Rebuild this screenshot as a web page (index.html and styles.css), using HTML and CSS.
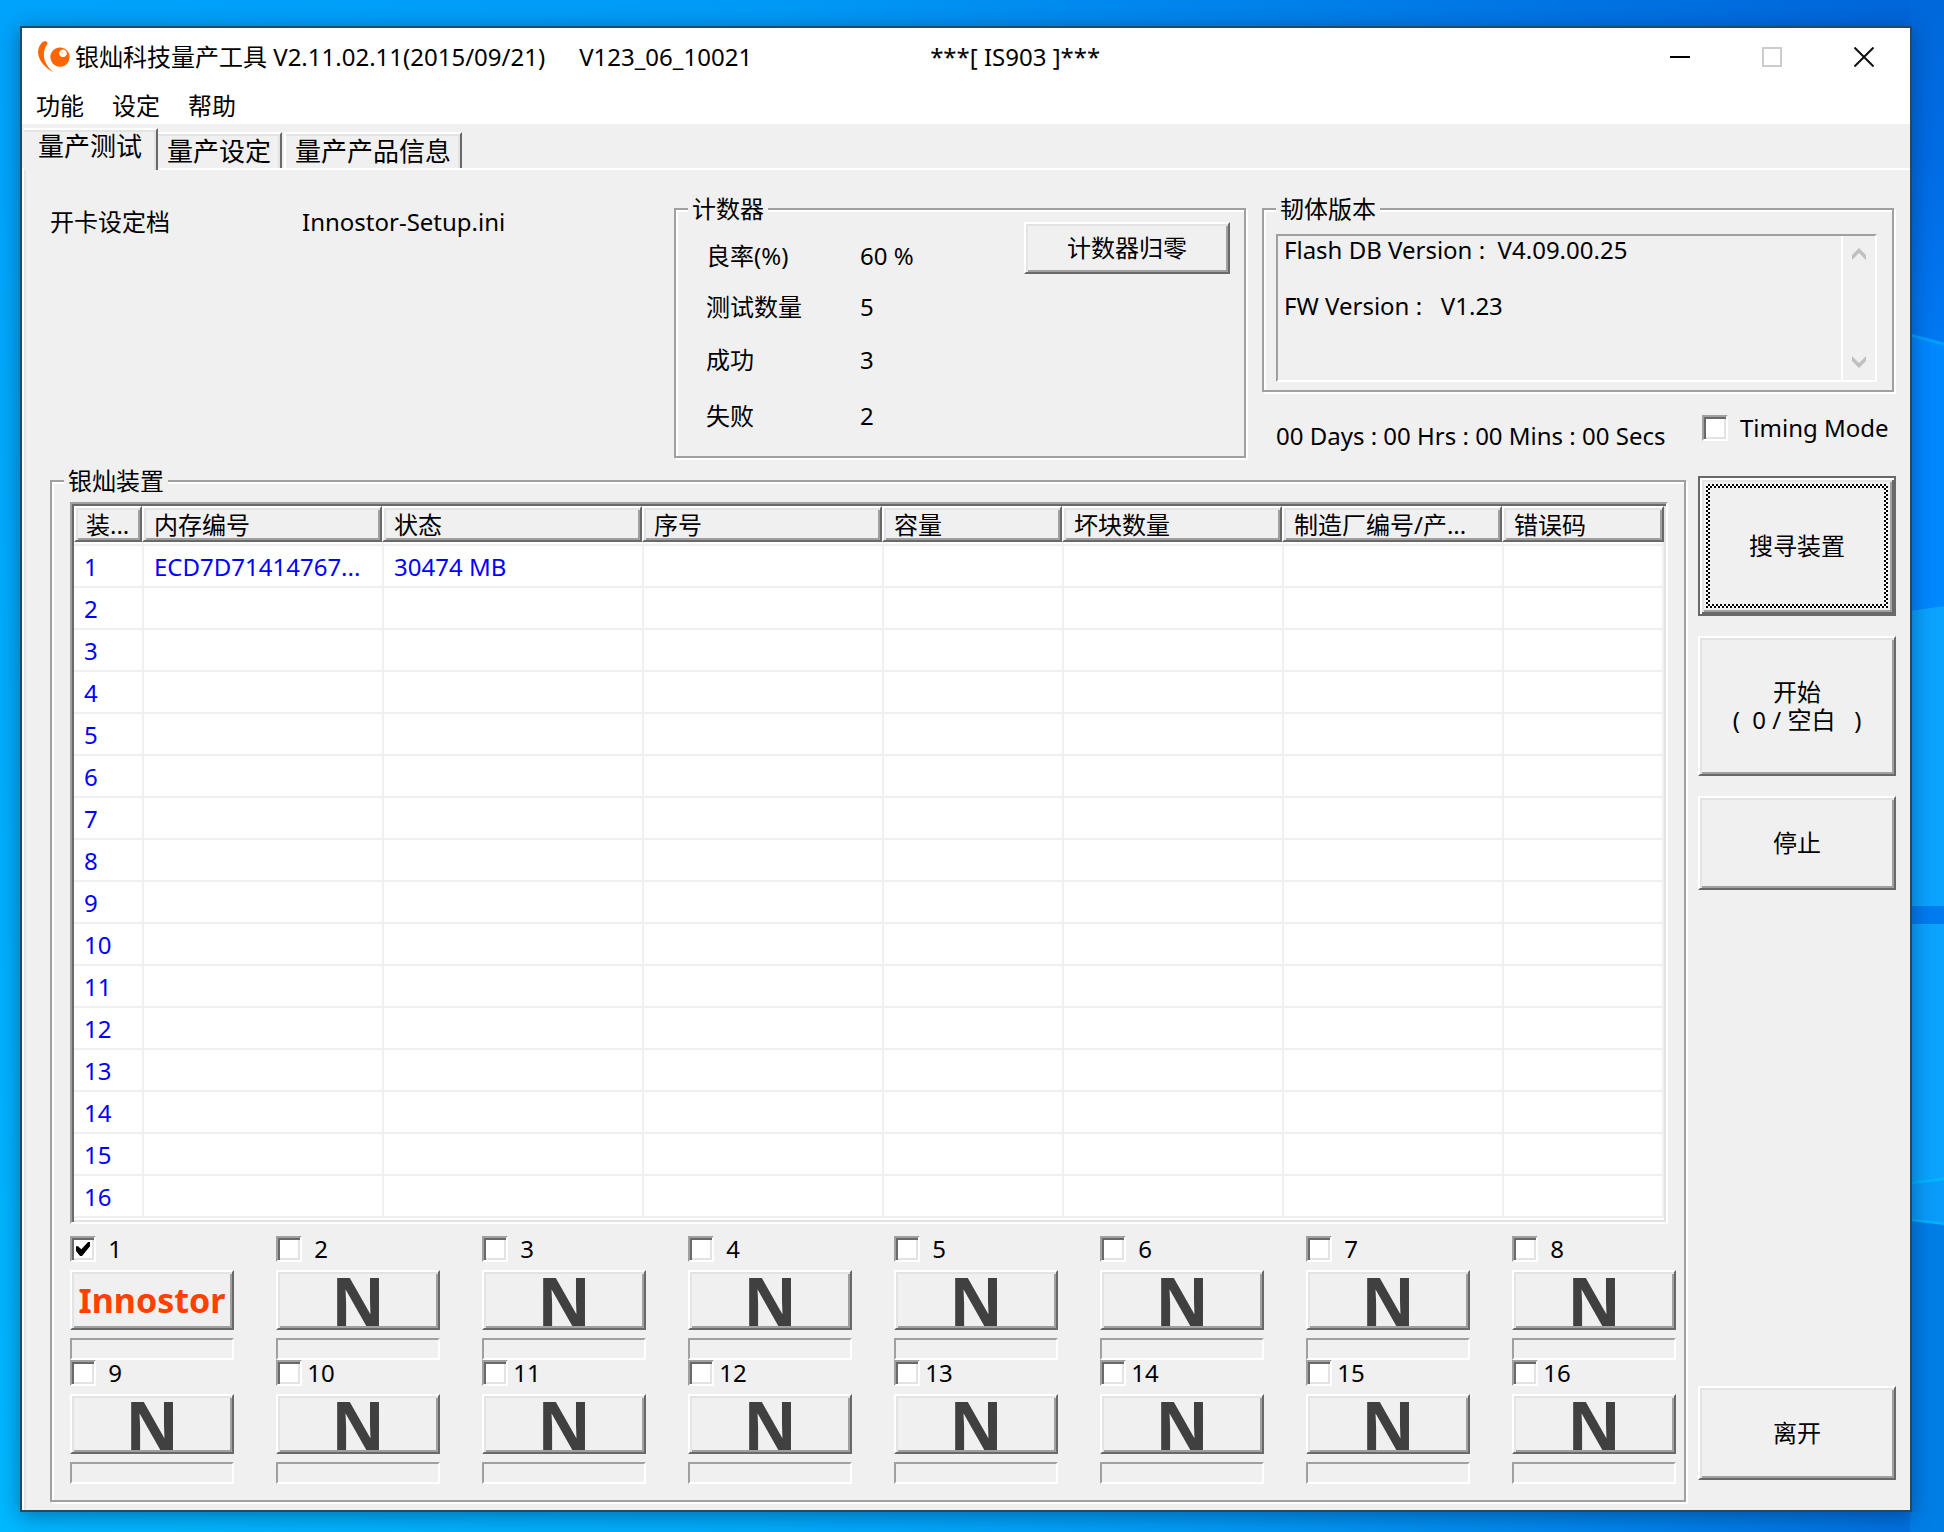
FILE: index.html
```html
<!DOCTYPE html>
<html lang="zh-CN">
<head>
<meta charset="utf-8">
<meta name="viewport" content="width=device-width, initial-scale=1">
<title>银灿科技量产工具 V2.11.02.11</title>
<link rel="stylesheet" href="styles.css">
</head>
<body>
<svg class="wallpaper" viewBox="0 0 34 1532" preserveAspectRatio="none" aria-hidden="true">
  <defs>
    <linearGradient id="sky" x1="0" y1="0" x2="0" y2="1">
      <stop offset="0" stop-color="#0068da"/>
      <stop offset="0.1" stop-color="#006ce4"/>
      <stop offset="0.22" stop-color="#0078f2"/>
    </linearGradient>
  </defs>
  <rect width="34" height="1532" fill="url(#sky)"/>
  <path d="M0 335L34 344V606L0 611Z" fill="#0088ff"/>
  <path d="M0 335L34 344" stroke="#00a0ff" stroke-width="3"/>
  <path d="M0 611L34 606V1180L0 1184Z" fill="#0aa4ff"/>
  <rect y="906" width="34" height="18" fill="#007cf0"/>
  <path d="M0 1184L34 1180V1224L0 1220Z" fill="#0a9cfa"/>
  <path d="M0 1183L34 1179M0 1220L34 1224" stroke="#00b4ff" stroke-width="3"/>
  <path d="M0 1221L34 1225V1532H0Z" fill="#007ee6"/>
</svg>
<main class="window">
  <header class="titlebar">
    <svg class="logo" viewBox="0 0 32 32" aria-hidden="true">
      <path d="M4 1.500C6-.5 10 0 9.500 2.500C3.500 12 4.500 21 15.500 31.500C2 24-2.500 13 1.500 5Z" fill="#ff6600"/>
      <path fill-rule="evenodd" d="M22 6.500a9.600 9.600 0 1 0 .01 0ZM25 8.500a3.800 3.800 0 1 1-.01 0Z" fill="#ff6600"/>
      <circle cx="24" cy="11.500" r="1.300" fill="#ffe0c8"/>
    </svg>
    <h1 class="title"><span>银灿科技量产工具 V2.11.02.11(2015/09/21)</span><span>V123_06_10021</span><span class="chip">***[ IS903 ]***</span></h1>
    <div class="caption">
      <button type="button" aria-label="最小化"><svg width="20" height="20" viewBox="0 0 20 20"><path d="M0 10H20" stroke="#000" stroke-width="2"/></svg></button>
      <button type="button" aria-label="最大化" disabled><svg width="20" height="20" viewBox="0 0 20 20"><path d="M1 1H19V19H1Z" fill="none" stroke="#ccc" stroke-width="2"/></svg></button>
      <button type="button" aria-label="关闭"><svg width="20" height="20" viewBox="0 0 20 20"><path d="M0.500 0.500L19.500 19.500M19.500 0.500L0.500 19.500" stroke="#111" stroke-width="2"/></svg></button>
    </div>
  </header>
  <nav class="menu">
    <a href="#function">功能</a>
    <a href="#settings">设定</a>
    <a href="#help">帮助</a>
  </nav>
  <div class="tabs" role="tablist">
    <button type="button" role="tab" class="tab tab-active" aria-selected="true">量产测试</button>
    <button type="button" role="tab" class="tab" aria-selected="false">量产设定</button>
    <button type="button" role="tab" class="tab" aria-selected="false">量产产品信息</button>
  </div>
  <div class="panel" role="tabpanel">
    <section class="overview">
      <div class="config"><span>开卡设定档</span><span>Innostor-Setup.ini</span></div>
      <fieldset class="group">
        <legend>计数器</legend>
        <div class="counter">
          <dl class="stats">
            <dt>良率(%)</dt><dd>60 %</dd>
            <dt>测试数量</dt><dd>5</dd>
            <dt>成功</dt><dd>3</dd>
            <dt>失败</dt><dd>2</dd>
          </dl>
          <button type="button" class="btn btn-reset">计数器归零</button>
        </div>
      </fieldset>
      <div>
        <fieldset class="group">
          <legend>韧体版本</legend>
          <div class="version">
            <textarea readonly aria-label="韧体版本">Flash DB Version :  V4.09.00.25

FW Version :   V1.23</textarea>
            <div class="scrollbar" aria-hidden="true">
              <svg width="14" height="12" viewBox="0 0 14 12"><path d="M0 12V7L7 0L14 7V12L7 5Z" fill="#c0c0c0"/></svg>
              <svg width="14" height="12" viewBox="0 0 14 12"><path d="M0 0V5L7 12L14 5V0L7 7Z" fill="#c0c0c0"/></svg>
            </div>
          </div>
        </fieldset>
        <div class="timing">
          <span class="elapsed">00 Days : 00 Hrs : 00 Mins : 00 Secs</span>
          <label class="timing-mode"><input type="checkbox" class="check">Timing Mode</label>
        </div>
      </div>
    </section>
    <section class="work">
      <fieldset class="group devices">
        <legend>银灿装置</legend>
        <div class="devices-body">
          <div class="list">
            <table>
              <colgroup><col class="c-id"><col class="c-mem"><col class="c-state"><col class="c-serial"><col class="c-size"><col class="c-bad"><col class="c-maker"><col></colgroup>
              <thead><tr><th>装...</th><th>内存编号</th><th>状态</th><th>序号</th><th>容量</th><th>坏块数量</th><th>制造厂编号/产...</th><th>错误码</th></tr></thead>
              <tbody>
                <tr><td>1</td><td>ECD7D71414767...</td><td>30474 MB</td><td></td><td></td><td></td><td></td><td></td></tr>
                <tr><td>2</td><td></td><td></td><td></td><td></td><td></td><td></td><td></td></tr>
                <tr><td>3</td><td></td><td></td><td></td><td></td><td></td><td></td><td></td></tr>
                <tr><td>4</td><td></td><td></td><td></td><td></td><td></td><td></td><td></td></tr>
                <tr><td>5</td><td></td><td></td><td></td><td></td><td></td><td></td><td></td></tr>
                <tr><td>6</td><td></td><td></td><td></td><td></td><td></td><td></td><td></td></tr>
                <tr><td>7</td><td></td><td></td><td></td><td></td><td></td><td></td><td></td></tr>
                <tr><td>8</td><td></td><td></td><td></td><td></td><td></td><td></td><td></td></tr>
                <tr><td>9</td><td></td><td></td><td></td><td></td><td></td><td></td><td></td></tr>
                <tr><td>10</td><td></td><td></td><td></td><td></td><td></td><td></td><td></td></tr>
                <tr><td>11</td><td></td><td></td><td></td><td></td><td></td><td></td><td></td></tr>
                <tr><td>12</td><td></td><td></td><td></td><td></td><td></td><td></td><td></td></tr>
                <tr><td>13</td><td></td><td></td><td></td><td></td><td></td><td></td><td></td></tr>
                <tr><td>14</td><td></td><td></td><td></td><td></td><td></td><td></td><td></td></tr>
                <tr><td>15</td><td></td><td></td><td></td><td></td><td></td><td></td><td></td></tr>
                <tr><td>16</td><td></td><td></td><td></td><td></td><td></td><td></td><td></td></tr>
              </tbody>
            </table>
          </div>
          <div class="slots">
            <div class="slot"><label><input type="checkbox" class="check" checked><span>1</span></label><button type="button" class="btn btn-slot btn-found">Innostor</button><div class="bar"></div></div>
            <div class="slot"><label><input type="checkbox" class="check"><span>2</span></label><button type="button" class="btn btn-slot">N</button><div class="bar"></div></div>
            <div class="slot"><label><input type="checkbox" class="check"><span>3</span></label><button type="button" class="btn btn-slot">N</button><div class="bar"></div></div>
            <div class="slot"><label><input type="checkbox" class="check"><span>4</span></label><button type="button" class="btn btn-slot">N</button><div class="bar"></div></div>
            <div class="slot"><label><input type="checkbox" class="check"><span>5</span></label><button type="button" class="btn btn-slot">N</button><div class="bar"></div></div>
            <div class="slot"><label><input type="checkbox" class="check"><span>6</span></label><button type="button" class="btn btn-slot">N</button><div class="bar"></div></div>
            <div class="slot"><label><input type="checkbox" class="check"><span>7</span></label><button type="button" class="btn btn-slot">N</button><div class="bar"></div></div>
            <div class="slot"><label><input type="checkbox" class="check"><span>8</span></label><button type="button" class="btn btn-slot">N</button><div class="bar"></div></div>
            <div class="slot"><label><input type="checkbox" class="check"><span>9</span></label><button type="button" class="btn btn-slot">N</button><div class="bar"></div></div>
            <div class="slot"><label><input type="checkbox" class="check"><span>10</span></label><button type="button" class="btn btn-slot">N</button><div class="bar"></div></div>
            <div class="slot"><label><input type="checkbox" class="check"><span>11</span></label><button type="button" class="btn btn-slot">N</button><div class="bar"></div></div>
            <div class="slot"><label><input type="checkbox" class="check"><span>12</span></label><button type="button" class="btn btn-slot">N</button><div class="bar"></div></div>
            <div class="slot"><label><input type="checkbox" class="check"><span>13</span></label><button type="button" class="btn btn-slot">N</button><div class="bar"></div></div>
            <div class="slot"><label><input type="checkbox" class="check"><span>14</span></label><button type="button" class="btn btn-slot">N</button><div class="bar"></div></div>
            <div class="slot"><label><input type="checkbox" class="check"><span>15</span></label><button type="button" class="btn btn-slot">N</button><div class="bar"></div></div>
            <div class="slot"><label><input type="checkbox" class="check"><span>16</span></label><button type="button" class="btn btn-slot">N</button><div class="bar"></div></div>
          </div>
        </div>
      </fieldset>
      <div class="actions">
        <button type="button" class="btn btn-default"><span class="focus"><span class="face">搜寻装置</span></span></button>
        <button type="button" class="btn btn-tall">开始<br>(&nbsp; 0 / 空白&nbsp;&nbsp; )</button>
        <button type="button" class="btn btn-low">停止</button>
        <button type="button" class="btn btn-low btn-exit">离开</button>
      </div>
    </section>
  </div>
</main>
</body>
</html>
```

FILE: styles.css
```css
:root {
  --face: #f0f0f0;
  --light: #e3e3e3;
  --shadow: #a0a0a0;
  --dark: #696969;
  --ui: "Noto Sans", "Noto Sans CJK SC", sans-serif;
}

* {
  box-sizing: border-box;
}

body {
  margin: 0;
  padding: 26px 32px 20px 20px;
  min-height: 100vh;
  position: relative;
  background:
    radial-gradient(ellipse at 0 100%, rgba(0, 184, 255, 1), rgba(0, 184, 255, 0) 80%),
    linear-gradient(90deg, #00a0fa, #0098f6 40%, #0074e4 80%, #0064d8);
  color: #000;
  font: 24px/28px var(--ui);
}

button,
input,
textarea {
  margin: 0;
  font: inherit;
  color: inherit;
}

.wallpaper {
  position: absolute;
  top: 0;
  right: 0;
  width: 34px;
  height: 100%;
}

.window {
  position: relative;
  border: 2px solid #1c4c6c;
  background: var(--face);
  box-shadow: 0 4px 20px rgba(0, 30, 80, 0.45);
}

/* Title bar and menu */
.titlebar {
  display: flex;
  align-items: center;
  height: 58px;
  padding-left: 16px;
  background: #fff;
}

.logo {
  width: 32px;
  height: 32px;
  margin-right: 5px;
}

.title {
  flex: 1;
  display: flex;
  gap: 34px;
  margin: 0;
  font-size: 24px;
  font-weight: 400;
  white-space: nowrap;
}

.chip {
  margin-left: 144px;
}

.caption {
  display: flex;
  height: 100%;
}

.caption button {
  display: grid;
  place-items: center;
  width: 92px;
  padding: 0;
  border: 0;
  background: none;
}

.menu {
  display: flex;
  gap: 28px;
  height: 38px;
  padding: 6px 14px;
  background: #fff;
}

.menu a {
  color: #000;
  text-decoration: none;
}

/* Tabs */
.tabs {
  display: flex;
  align-items: flex-end;
  height: 44px;
  padding-left: 2px;
}

.tab {
  height: 36px;
  padding: 0 9px;
  border: solid;
  border-width: 2px 2px 0 0;
  border-color: #fff var(--dark) transparent transparent;
  background: var(--face);
  box-shadow: inset -2px 2px 0 var(--light), inset -2px 0 0 var(--shadow);
  font-size: 26px;
  line-height: 28px;
  white-space: nowrap;
}

.tab + .tab + .tab {
  margin-left: 2px;
  border-left: 2px solid #fff;
}

.tab-active {
  position: relative;
  height: 42px;
  margin-bottom: -2px;
  padding: 0 14px 8px;
}

.panel {
  border-top: 2px solid #fff;
  border-left: 2px solid #fff;
  box-shadow: inset 2px 0 0 var(--light);
  padding: 28px 0 8px 26px;
}

/* Etched group box */
.group {
  min-width: 0;
  margin: 0;
  padding: 0;
  border: 2px solid var(--shadow);
  box-shadow: 2px 2px 0 #fff, inset 2px 2px 0 #fff;
}

.group > legend {
  margin-left: 12px;
  padding: 0 4px;
  background: var(--face);
  line-height: 22px;
}

.overview {
  display: grid;
  grid-template-columns: 608fr 572fr 632fr;
  gap: 16px;
  align-items: start;
  padding-right: 16px;
}

.config {
  display: grid;
  grid-template-columns: 252px 1fr;
  padding-top: 10px;
}

.counter {
  display: flex;
  align-items: flex-start;
  justify-content: space-between;
  padding: 2px 14px 12px 30px;
}

.stats {
  display: grid;
  grid-template-columns: 154px auto;
  grid-template-rows: 52px 50px 56px 56px;
  align-items: center;
  margin: 0;
  padding-top: 8px;
}

.stats dd {
  margin: 0;
}

.version {
  display: flex;
  height: 148px;
  margin: 14px 15px 8px 12px;
  border: 2px solid;
  border-color: var(--shadow) #fff #fff var(--shadow);
}

.version textarea {
  flex: 1;
  min-width: 0;
  padding: 0 6px;
  border: 0;
  background: none;
  resize: none;
  overflow: hidden;
  outline: 0;
}

.scrollbar {
  display: flex;
  flex-direction: column;
  align-items: center;
  justify-content: space-between;
  width: 34px;
  padding: 12px 0;
  border-left: 2px solid #fff;
}

.timing {
  display: grid;
  grid-template-columns: 426px auto;
  height: 36px;
  margin: 22px 0 2px 14px;
  white-space: nowrap;
}

.elapsed {
  align-self: end;
}

.timing-mode {
  display: flex;
  gap: 12px;
  align-items: center;
  align-self: start;
}

.check {
  appearance: none;
  flex: none;
  width: 26px;
  height: 26px;
  border: 2px solid;
  border-color: var(--shadow) #fff #fff var(--shadow);
  background: #fff;
  box-shadow: inset 2px 2px 0 var(--dark), inset -2px -2px 0 var(--light);
}

.check:checked::before {
  content: "";
  display: block;
  width: 14px;
  height: 14px;
  margin: 4px;
  background: #000;
  clip-path: polygon(0 30%, 14% 30%, 38% 52%, 86% 0, 100% 0, 100% 30%, 43% 100%, 29% 100%, 0 65%);
}

/* Raised push button */
.btn {
  padding: 0;
  border: 2px solid;
  border-color: #fff var(--dark) var(--dark) #fff;
  background: var(--face);
  box-shadow: inset 2px 2px 0 var(--light), inset -2px -2px 0 var(--shadow);
  line-height: 28px;
}

.btn-reset {
  width: 206px;
  height: 52px;
}

/* Device list */
.work {
  display: flex;
  gap: 12px;
  margin-top: 12px;
  padding-right: 14px;
}

.devices {
  flex: 1;
}

.devices-body {
  padding: 10px 8px 16px 18px;
}

.list {
  margin-right: 8px;
  padding: 2px;
  border: 2px solid;
  border-color: var(--shadow) #fff #fff var(--shadow);
  background: #fff;
  box-shadow: inset 2px 2px 0 var(--dark), inset -2px -2px 0 var(--light);
}

.list table {
  width: 100%;
  table-layout: fixed;
  border-collapse: separate;
  border-spacing: 0;
  border-bottom: 2px solid #fff;
}

.c-id { width: 68px; }
.c-mem { width: 240px; }
.c-state { width: 260px; }
.c-serial { width: 240px; }
.c-size { width: 180px; }
.c-bad { width: 220px; }
.c-maker { width: 220px; }

.list th {
  height: 36px;
  padding: 2px 0 0 10px;
  border: 2px solid;
  border-color: #fff var(--dark) var(--dark) #fff;
  background: var(--face);
  box-shadow: inset 2px 2px 0 var(--light), inset -2px -2px 0 var(--shadow);
  font-weight: 400;
  text-align: left;
  line-height: 28px;
  white-space: nowrap;
}

.list td {
  height: 42px;
  padding: 2px 0 0 10px;
  border: solid var(--face);
  border-width: 0 0 2px 2px;
  color: #00f;
  white-space: nowrap;
}

.list td:first-child {
  border-left: 0;
}

.list td:last-child {
  border-right-width: 2px;
}

.list tbody tr:first-child td {
  height: 46px;
  padding-top: 6px;
  background: linear-gradient(#fff 2px, var(--face) 2px, var(--face) 4px, #fff 4px);
}

/* Port slots */
.slots {
  display: grid;
  grid-template-columns: repeat(8, 164px);
  justify-content: space-between;
  padding-top: 12px;
}

.slot {
  display: grid;
  row-gap: 8px;
}

.slot label {
  display: flex;
  align-items: center;
  height: 26px;
}

.slot label span {
  width: 38px;
  text-align: center;
}

.btn-slot {
  height: 60px;
  color: #404040;
  font-size: 66px;
  font-weight: 700;
  line-height: 56px;
}

.btn-found {
  color: #ff4000;
  font-size: 34px;
}

.bar {
  height: 22px;
  border: 2px solid;
  border-color: var(--shadow) #fff #fff var(--shadow);
}

/* Action column */
.actions {
  display: flex;
  flex-direction: column;
  gap: 20px;
  width: 198px;
  padding: 6px 0 22px;
}

.btn-tall,
.btn-default {
  height: 140px;
}

.btn-low {
  height: 94px;
}

.btn-exit {
  margin-top: auto;
}

.btn-default {
  padding: 6px;
  border-color: var(--dark);
  box-shadow: inset 2px 2px 0 #fff, inset -2px -2px 0 var(--dark), inset 4px 4px 0 var(--light), inset -4px -4px 0 var(--shadow);
}

.focus {
  display: block;
  height: 100%;
  padding: 4px;
  background: repeating-conic-gradient(#000 0 25%, #fff 0 50%) 0 0 / 4px 4px;
}

.face {
  display: grid;
  place-items: center;
  height: 100%;
  background: var(--face);
}
```
